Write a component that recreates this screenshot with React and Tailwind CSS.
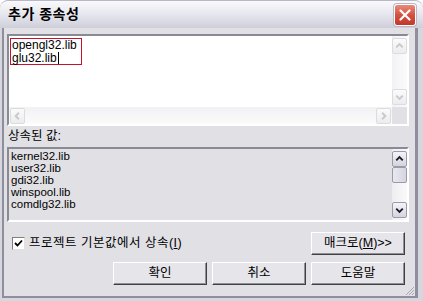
import React from 'react';

const font = "font-['Liberation_Sans','Noto_Sans_CJK_KR',sans-serif]";

const Chevron = ({ dir = 'up', color = '#000' }) => {
  const d = {
    up: 'M3.5 8.5 L7 5 L10.5 8.5',
    down: 'M3.5 5.5 L7 9 L10.5 5.5',
    right: 'M5.5 3.5 L9 7 L5.5 10.5',
    left: 'M8.5 3.5 L5 7 L8.5 10.5',
  }[dir];
  return (
    <svg width="14" height="14" viewBox="0 0 14 14">
      <path d={d} fill="none" stroke={color} strokeWidth="2" />
    </svg>
  );
};

const ArrowBtn = ({ dir, enabled }) => (
  <div
    className={`w-[15px] h-[16px] rounded-[2px] flex items-center justify-center border ${
      enabled
        ? 'bg-gradient-to-b from-[#f4f4f8] to-[#d4d4de] border-[#9a9aaa]'
        : 'bg-gradient-to-b from-[#fbfbfb] to-[#ececee] border-[#dcdce0]'
    }`}
  >
    <Chevron dir={dir} color={enabled ? '#1a1a28' : '#c8c8cc'} />
  </div>
);

const Button = ({ children, className = '' }) => (
  <button
    className={`h-[23px] w-[94px] bg-[#e6e5ea] border border-t-white border-l-white border-r-[#404040] border-b-[#404040] shadow-[inset_-1px_-1px_0_#909098] text-[12.5px] text-black flex items-center justify-center ${className}`}
  >
    {children}
  </button>
);

export default function App() {
  const inherited = ['kernel32.lib', 'user32.lib', 'gdi32.lib', 'winspool.lib', 'comdlg32.lib'];

  return (
    <div className={`w-[423px] h-[301px] bg-white overflow-hidden ${font}`}>
      <div className="flex flex-col h-full">
        {/* title bar */}
        <div className="h-[28px] flex items-center justify-between pl-[8px] pr-[7px] rounded-t-[8px] bg-gradient-to-b from-[#fafafc] via-[#e6e6ee] to-[#cfcfdb] border-t border-[#b8b8c8]">
          <span className="text-[14px] font-bold text-black tracking-[0.5px]">추가 종속성</span>
          <div className="w-[22px] h-[22px] rounded-[3px] border border-white bg-gradient-to-b from-[#e98a7c] via-[#d5513f] to-[#c0392b] flex items-center justify-center shadow-[0_0_0_1px_#b8b8c4]">
            <svg width="12" height="12" viewBox="0 0 12 12">
              <path d="M1.5 1.5 L10.5 10.5 M10.5 1.5 L1.5 10.5" stroke="#fff" strokeWidth="2.2" strokeLinecap="round" />
            </svg>
          </div>
        </div>

        {/* frame */}
        <div className="flex-1 pl-[2px] pr-[5px] pb-[3px] bg-[#d6d6de]">
          <div className="relative h-full border-l-2 border-r-[3px] border-b-2 border-[#8e8e9c] bg-[#e1e0e5] pl-[3px] pr-[6px] pt-[6px] flex flex-col">
            {/* edit box */}
            <div className="h-[92px] flex flex-col border-2 border-t-[#8a8a94] border-l-[#8a8a94] border-r-white border-b-white bg-white">
              <div className="flex-1 flex min-h-0">
                <div className="flex-1 pt-[2px] pl-[1px]">
                  <div className="w-[72px] h-[27px] border border-[#c8102e] pl-[1px] text-[12px] leading-[12.5px] text-black">
                    <div>opengl32.lib</div>
                    <div className="flex items-center">
                      glu32.lib<span className="w-px h-[12px] bg-black ml-px" />
                    </div>
                  </div>
                </div>
                <div className="w-[15px] flex flex-col justify-between py-[2px] bg-gradient-to-r from-[#f2f2f5] to-[#fbfbfc]">
                  <ArrowBtn dir="up" />
                  <ArrowBtn dir="down" />
                </div>
              </div>
              <div className="h-[17px] flex">
                <div className="flex-1 flex justify-between items-center px-[1px] bg-gradient-to-b from-[#f2f2f5] to-[#fbfbfc]">
                  <ArrowBtn dir="left" />
                  <ArrowBtn dir="right" />
                </div>
                <div className="w-[15px] bg-[#e1e0e5]" />
              </div>
            </div>

            {/* label */}
            <div className="h-[21px] flex items-center pl-[1px] text-[12.5px] text-black">상속된 값:</div>

            {/* inherited list */}
            <div className="h-[75px] flex border-2 border-t-[#8a8a94] border-l-[#8a8a94] border-r-white border-b-white bg-[#e1e0e5]">
              <div className="flex-1 pl-[2px] pt-[1px] text-[11.5px] text-black">
                {inherited.map((item) => (
                  <div key={item} className="h-[12px] leading-[12px]">{item}</div>
                ))}
              </div>
              <div className="w-[15px] flex flex-col py-[2px] bg-gradient-to-r from-[#eeeef2] to-[#fafafc]">
                <ArrowBtn dir="up" enabled />
                <div className="w-[15px] h-[16px] rounded-[2px] border border-[#9a9aaa] bg-gradient-to-r from-[#e8e8ee] to-[#d6d6e0]" />
                <div className="flex-1" />
                <ArrowBtn dir="down" enabled />
              </div>
            </div>

            {/* checkbox + macro */}
            <div className="mt-[10px] h-[23px] flex items-center justify-between pr-[4px]">
              <label className="flex items-center gap-[4px] pl-[5px] text-[12.5px] text-black">
                <span className="w-[13px] h-[13px] bg-white border border-t-[#808080] border-l-[#808080] border-r-[#e0e0e0] border-b-[#e0e0e0] flex items-center justify-center">
                  <svg width="9" height="9" viewBox="0 0 9 9">
                    <path d="M1 4 L3.5 6.5 L8 1.5" fill="none" stroke="#000" strokeWidth="1.8" />
                  </svg>
                </span>
                <span className="tracking-[0.5px]">
                  프로젝트 기본값에서 상속(<span className="underline">I</span>)
                </span>
              </label>
              <Button>
                매크로(<span className="underline">M</span>)&gt;&gt;
              </Button>
            </div>

            {/* bottom buttons */}
            <div className="mt-[7px] h-[23px] flex justify-end gap-[5px] pr-[4px]">
              <Button>확인</Button>
              <Button>취소</Button>
              <Button>도움말</Button>
            </div>

            {/* resize grip */}
            <svg className="absolute right-[0px] bottom-[0px]" width="11" height="11" viewBox="0 0 11 11">
              <path d="M10 2 L2 10 M10 5 L5 10 M10 8 L8 10" stroke="#a8a8b4" strokeWidth="1" />
            </svg>
          </div>
        </div>
      </div>
    </div>
  );
}
